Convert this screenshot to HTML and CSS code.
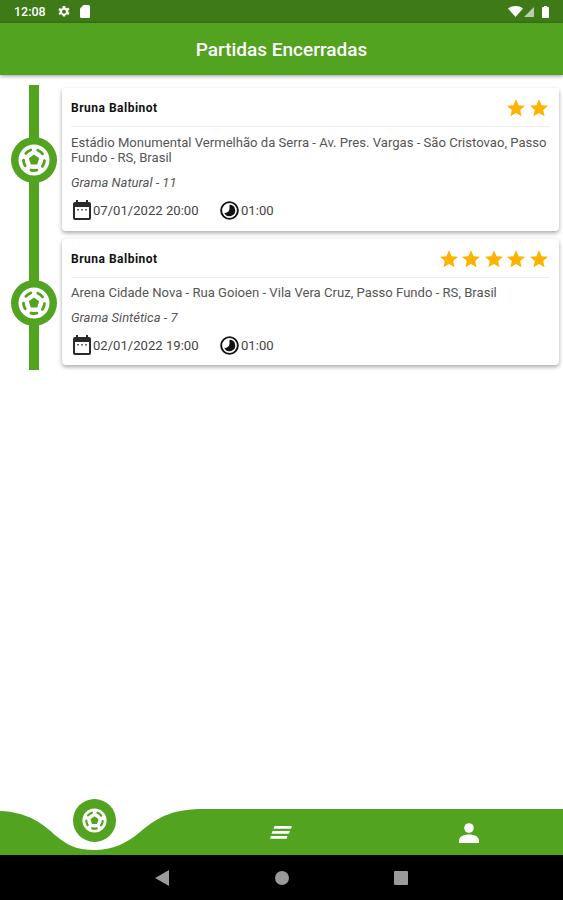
FILE: index.html
```html
<!DOCTYPE html>
<html lang="en">
<head>
    <meta charset="UTF-8">
    <meta name="viewport" content="width=device-width, initial-scale=1.0">
    <title>Partidas Encerradas</title>
    <link rel="stylesheet" href="styles.css">
</head>
<body>
    <svg class="defs" width="0" height="0">
        <symbol id="ball" viewBox="0 0 32 32">
            <circle cx="16" cy="16" r="15.500" fill="#fff"/>
            <circle cx="16" cy="16" r="10.500" fill="none" stroke="#52a31f" stroke-width="2.800" stroke-dasharray="6 7.190" stroke-linecap="round" transform="rotate(74 16 16)"/>
            <polygon points="16,10.500 21.200,14.300 19.200,20.500 12.800,20.500 10.800,14.300" fill="#52a31f"/>
        </symbol>
        <symbol id="star" viewBox="0 0 24 24">
            <path d="M12 1.500l3.100 7.100 7.700.7-5.800 5.100 1.700 7.600L12 18l-6.700 4 1.700-7.600-5.800-5.100 7.700-.7z" fill="#ffb300"/>
        </symbol>
        <symbol id="calendar" viewBox="0 0 18 20">
            <path d="M3 0h2v2h8V0h2v2h1a2 2 0 0 1 2 2v14a2 2 0 0 1-2 2H2a2 2 0 0 1-2-2V4a2 2 0 0 1 2-2h1zM2 7v11h14V7z" fill="#2a2a2a"/>
            <path d="M4 9h2v1.500H4zM8 9h2v1.500H8zM12 9h2v1.500h-2z" fill="#666"/>
        </symbol>
        <symbol id="clock" viewBox="0 0 20 20">
            <circle cx="10" cy="10" r="8.800" fill="#fff" stroke="#111" stroke-width="2"/>
            <path d="M10 4a6 6 0 1 1-5.500 8.400c3 .6 5.500-1.500 5.500-4.400z" fill="#111"/>
        </symbol>
    </svg>

    <div class="status-bar">
        <div class="status-left">
            <span class="status-time">12:08</span>
            <svg class="status-icon" width="14" height="14" viewBox="0 0 14 14"><path d="M5.800 1h2.400l.4 1.700 1.300.6 1.500-.9 1.200 2-1.300 1.100v1.500l1.300 1.100-1.200 2-1.500-.9-1.300.6-.4 1.700H5.800l-.4-1.700-1.300-.6-1.500.9-1.200-2L2.700 7.500V6L1.400 4.900l1.200-2 1.500.9 1.300-.6z" fill="#fff"/><circle cx="7" cy="6.800" r="2" fill="#3e7a18"/></svg>
            <svg class="status-icon" width="10" height="13" viewBox="0 0 10 13"><path d="M3.500 0H8.500A1.500 1.500 0 0 1 10 1.500V11.500A1.500 1.500 0 0 1 8.500 13H1.500A1.500 1.500 0 0 1 0 11.500V3.500z" fill="#fff"/></svg>
        </div>
        <div class="status-right">
            <svg width="15" height="11" viewBox="0 0 15 11"><path d="M0 2.500C4-.8 11-.8 15 2.500L7.500 11z" fill="#fff"/></svg>
            <svg width="10" height="10" viewBox="0 0 10 10"><path d="M10 0V10H0z" fill="#b9cfa9"/></svg>
            <svg class="battery" width="7" height="12" viewBox="0 0 7 12"><path d="M2 0h3v1h1.200a.8.8 0 0 1 .8.800v9.400a.8.8 0 0 1-.8.800H.8a.8.8 0 0 1-.8-.8V1.800A.8.8 0 0 1 .8 1H2z" fill="#fff"/></svg>
        </div>
    </div>

    <header class="app-bar">Partidas Encerradas</header>

    <main class="timeline">
        <div class="match">
            <div class="marker">
                <div class="marker-disc"><svg width="32" height="32"><use href="#ball"/></svg></div>
            </div>
            <article class="card">
                <div class="card-head">
                    <span class="player">Bruna Balbinot</span>
                    <div class="stars">
                        <svg width="20" height="20"><use href="#star"/></svg>
                        <svg width="20" height="20"><use href="#star"/></svg>
                    </div>
                </div>
                <p class="address">Estádio Monumental Vermelhão da Serra - Av. Pres. Vargas - São Cristovao, Passo Fundo - RS, Brasil</p>
                <p class="pitch">Grama Natural - 11</p>
                <div class="meta">
                    <span class="meta-item meta-date"><svg width="18" height="20"><use href="#calendar"/></svg>07/01/2022 20:00</span>
                    <span class="meta-item"><svg width="19" height="19"><use href="#clock"/></svg>01:00</span>
                </div>
            </article>
        </div>
        <div class="match">
            <div class="marker">
                <div class="marker-disc"><svg width="32" height="32"><use href="#ball"/></svg></div>
            </div>
            <article class="card">
                <div class="card-head">
                    <span class="player">Bruna Balbinot</span>
                    <div class="stars">
                        <svg width="20" height="20"><use href="#star"/></svg>
                        <svg width="20" height="20"><use href="#star"/></svg>
                        <svg width="20" height="20"><use href="#star"/></svg>
                        <svg width="20" height="20"><use href="#star"/></svg>
                        <svg width="20" height="20"><use href="#star"/></svg>
                    </div>
                </div>
                <p class="address">Arena Cidade Nova - Rua Goioen - Vila Vera Cruz, Passo Fundo - RS, Brasil</p>
                <p class="pitch">Grama Sintética - 7</p>
                <div class="meta">
                    <span class="meta-item meta-date"><svg width="18" height="20"><use href="#calendar"/></svg>02/01/2022 19:00</span>
                    <span class="meta-item"><svg width="19" height="19"><use href="#clock"/></svg>01:00</span>
                </div>
            </article>
        </div>
    </main>

    <nav class="tabs">
        <svg class="tabs-wave" width="563" height="57" viewBox="0 0 563 57">
            <path d="M0 13C28 14 43 26 55 37C67 47 76 52 94 52C113 52 127 45 140 34C160 17 175 11 205 11H563V57H0Z" fill="#52a31f"/>
        </svg>
        <div class="tab">
            <div class="tab-active"><svg width="25" height="25"><use href="#ball"/></svg></div>
        </div>
        <div class="tab tab-low">
            <svg width="22" height="13" viewBox="0 0 22 13"><path d="M4.500 0H22L21 2.700H3.500zM2.500 5H20L19 7.700H1.500zM.8 10H17.500L16.700 12.700H0z" fill="#fff"/></svg>
        </div>
        <div class="tab tab-low">
            <svg class="tab-person" width="20" height="20" viewBox="0 0 20 20"><circle cx="10" cy="5" r="4.800" fill="#fff"/><path d="M0 20V17.500C0 13.500 5 11.500 10 11.500S20 13.500 20 17.500V20z" fill="#fff"/></svg>
        </div>
    </nav>

    <div class="system-bar">
        <svg width="14" height="16" viewBox="0 0 14 16"><path d="M14 0V16L0 8z" fill="#9a9a9a"/></svg>
        <svg width="14" height="14" viewBox="0 0 14 14"><circle cx="7" cy="7" r="7" fill="#9a9a9a"/></svg>
        <svg width="14" height="14" viewBox="0 0 14 14"><rect width="14" height="14" rx="1" fill="#9a9a9a"/></svg>
    </div>
</body>
</html>
```

FILE: styles.css
```css
* {
    box-sizing: border-box;
}
body {
    margin: 0;
    width: 563px;
    height: 900px;
    display: flex;
    flex-direction: column;
    overflow: hidden;
    background-color: #fff;
    font-family: 'Roboto', sans-serif;
}
.defs {
    display: none;
}
.status-bar {
    height: 23px;
    flex: none;
    display: flex;
    align-items: center;
    justify-content: space-between;
    padding: 0 14px;
    background-color: #3e7a18;
    color: #fff;
    font-size: 12.500px;
    font-weight: 500;
}
.status-left {
    display: flex;
    align-items: center;
}
.status-time {
    margin-right: 11px;
}
.status-icon {
    margin-right: 9px;
}
.status-right {
    display: flex;
    align-items: center;
    gap: 1px;
}
.battery {
    margin-left: 7px;
}
.app-bar {
    height: 52px;
    flex: none;
    display: flex;
    align-items: center;
    justify-content: center;
    background-color: #52a31f;
    color: #fff;
    font-size: 19px;
    font-weight: 500;
    box-shadow: 0 1px 4px rgba(0, 0, 0, 0.4);
    z-index: 1;
}
.timeline {
    flex: 1;
    padding-top: 10px;
}
.match {
    display: flex;
    padding-right: 4px;
}
.marker {
    width: 62px;
    flex: none;
    display: flex;
    align-items: center;
    padding-left: 11px;
    background: linear-gradient(#52a31f, #52a31f) 18px 0 / 10px 100% no-repeat;
    background-origin: content-box;
}
.marker-disc {
    width: 46px;
    height: 46px;
    border-radius: 50%;
    display: flex;
    align-items: center;
    justify-content: center;
    background-color: #52a31f;
}
.card {
    flex: 1;
    height: 143px;
    margin: 3px 0 4px;
    padding: 0 9px;
    background-color: #fff;
    border-radius: 4px;
    box-shadow: 0 2px 4px rgba(0, 0, 0, 0.35);
}
.match + .match .card {
    height: 126px;
    margin: 4px 0 5px;
}
.match + .match .address {
    margin-top: 7px;
}
.card-head {
    height: 39px;
    padding-top: 2px;
    display: flex;
    align-items: center;
    justify-content: space-between;
    border-bottom: 1px solid #eee;
    color: #111;
}
.player {
    font-size: 12px;
    font-weight: 700;
    letter-spacing: 0.500px;
}
.stars {
    display: flex;
    gap: 2.500px;
    margin-right: 1.500px;
}
.address {
    margin: 8px 0 0;
    font-size: 13.100px;
    line-height: 15px;
    color: #555;
}
.pitch {
    margin: 10px 0 0;
    font-size: 13px;
    line-height: 15px;
    font-style: italic;
    color: #555;
}
.meta {
    display: flex;
    align-items: center;
    margin-top: 10px;
    padding-left: 2px;
    font-size: 13.100px;
    color: #444;
}
.meta-item {
    display: flex;
    align-items: center;
    gap: 2px;
}
.meta-date {
    width: 147px;
}
.tabs {
    height: 57px;
    flex: none;
    position: relative;
    display: grid;
    grid-template-columns: repeat(3, 1fr);
}
.tabs-wave {
    position: absolute;
    top: 0;
    left: 0;
}
.tab {
    position: relative;
    display: flex;
    justify-content: center;
    align-items: center;
}
.tab-low {
    padding-top: 11px;
}
.tab-person {
    margin-top: 1px;
}
.tab-active {
    width: 43px;
    height: 43px;
    margin-bottom: 13px;
    margin-left: 1px;
    border-radius: 50%;
    display: flex;
    align-items: center;
    justify-content: center;
    background-color: #52a31f;
}
.system-bar {
    height: 45px;
    flex: none;
    display: grid;
    grid-template-columns: 14px 14px 14px;
    justify-content: space-between;
    align-items: center;
    padding: 0 155px;
    background-color: #000;
}
```
